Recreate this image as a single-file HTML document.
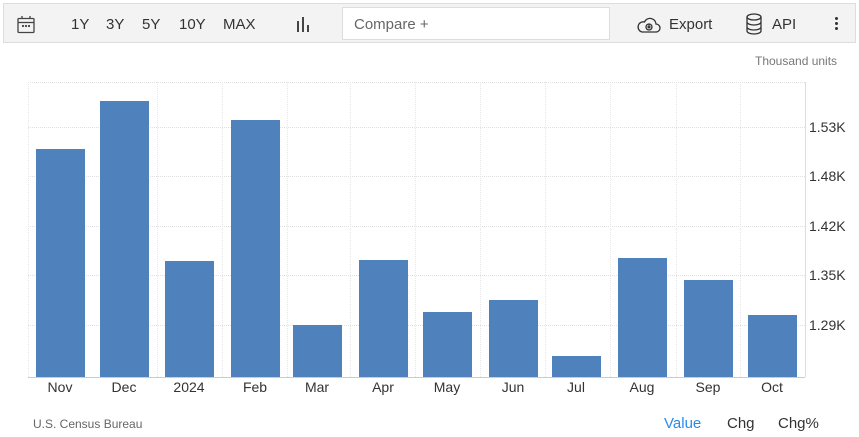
<!DOCTYPE html>
<html><head><style>
body{margin:0;width:859px;height:437px;background:#fff;font-family:"Liberation Sans",sans-serif;position:relative;overflow:hidden}
.tb{position:absolute;left:3px;top:3px;width:853px;height:40px;background:#f3f3f3;border:1px solid #ddd;box-sizing:border-box}
.t{position:absolute;font-size:15px;color:#333;top:16px}
.bar{position:absolute;background:#4f81bd;width:49px;bottom:60px}
.xl{position:absolute;top:379px;font-size:14px;color:#333;width:60px;text-align:center}
.yl{position:absolute;left:809px;font-size:14px;color:#333}
.g{position:absolute;left:28px;width:777px;border-top:1px dotted #e0e0e0}
.v{position:absolute;top:82px;height:295px;border-left:1px dotted #e6e6e6}
</style></head><body>
<div class="tb"></div>
<svg style="position:absolute;left:16px;top:15px" width="20" height="20" viewBox="0 0 20 20" fill="none" stroke="#444" stroke-width="1.3"><rect x="2" y="3.5" width="16" height="14" rx="1"/><line x1="2" y1="7.5" x2="18" y2="7.5"/><line x1="6" y1="1" x2="6" y2="4"/><line x1="14" y1="1" x2="14" y2="4"/><circle cx="7" cy="11" r=".5"/><circle cx="10" cy="11" r=".5"/><circle cx="13" cy="11" r=".5"/></svg>
<span class="t" style="left:71px">1Y</span><span class="t" style="left:106px">3Y</span><span class="t" style="left:142px">5Y</span><span class="t" style="left:179px">10Y</span><span class="t" style="left:223px">MAX</span>
<svg style="position:absolute;left:296px;top:16px" width="16" height="16"><rect x="1" y="5" width="2" height="11" fill="#444"/><rect x="6" y="1" width="2" height="15" fill="#444"/><rect x="11" y="9" width="2" height="7" fill="#444"/></svg>
<div style="position:absolute;left:342px;top:7px;width:268px;height:33px;background:#fff;border:1px solid #ddd;box-sizing:border-box"></div>
<span class="t" style="left:354px;color:#666">Compare +</span>
<svg style="position:absolute;left:636px;top:15px" width="26" height="20" viewBox="0 0 26 20" fill="none" stroke="#333" stroke-width="1.3"><path d="M6 17h14a4 4 0 0 0 0-8 6 6 0 0 0-11.5-2A5 5 0 0 0 6 17z"/><circle cx="13" cy="12" r="3" /><path d="M13 9v4m-1.5-1.5L13 13l1.5-1.5"/></svg>
<span class="t" style="left:669px">Export</span>
<svg style="position:absolute;left:745px;top:13px" width="18" height="22" viewBox="0 0 18 22" fill="none" stroke="#333" stroke-width="1.3"><ellipse cx="9" cy="4" rx="7" ry="3"/><path d="M2 4v14c0 1.7 3 3 7 3s7-1.3 7-3V4M2 9c0 1.7 3 3 7 3s7-1.3 7-3M2 14c0 1.7 3 3 7 3s7-1.3 7-3"/></svg>
<span class="t" style="left:772px">API</span>
<div style="position:absolute;left:835px;top:17px;width:3px;height:3px;background:#333;border-radius:50%;box-shadow:0 5px #333,0 10px #333"></div>
<div style="position:absolute;left:755px;top:54px;font-size:12px;color:#777">Thousand units</div>
<div class="g" style="top:82px"></div><div class="g" style="top:127px"></div><div class="g" style="top:176px"></div><div class="g" style="top:226px"></div><div class="g" style="top:275px"></div><div class="g" style="top:325px"></div>
<div class="v" style="left:28px"></div><div class="v" style="left:157px"></div><div class="v" style="left:222px"></div><div class="v" style="left:287px"></div><div class="v" style="left:350px"></div><div class="v" style="left:415px"></div><div class="v" style="left:480px"></div><div class="v" style="left:545px"></div><div class="v" style="left:610px"></div><div class="v" style="left:676px"></div><div class="v" style="left:740px"></div>
<div style="position:absolute;left:805px;top:82px;height:295px;border-left:1px solid #ddd"></div>
<div style="position:absolute;left:28px;top:377px;width:777px;border-top:1px solid #ccc"></div>
<div class="bar" style="left:36px;top:149px"></div>
<div class="bar" style="left:100px;top:101px"></div>
<div class="bar" style="left:165px;top:261px"></div>
<div class="bar" style="left:231px;top:120px"></div>
<div class="bar" style="left:293px;top:325px"></div>
<div class="bar" style="left:359px;top:260px"></div>
<div class="bar" style="left:423px;top:312px"></div>
<div class="bar" style="left:489px;top:300px"></div>
<div class="bar" style="left:552px;top:356px"></div>
<div class="bar" style="left:618px;top:258px"></div>
<div class="bar" style="left:684px;top:280px"></div>
<div class="bar" style="left:748px;top:315px"></div>
<div class="yl" style="top:119px">1.53K</div><div class="yl" style="top:168px">1.48K</div><div class="yl" style="top:218px">1.42K</div><div class="yl" style="top:267px">1.35K</div><div class="yl" style="top:317px">1.29K</div>
<div class="xl" style="left:30px">Nov</div><div class="xl" style="left:94px">Dec</div><div class="xl" style="left:159px">2024</div><div class="xl" style="left:225px">Feb</div><div class="xl" style="left:287px">Mar</div><div class="xl" style="left:353px">Apr</div><div class="xl" style="left:417px">May</div><div class="xl" style="left:483px">Jun</div><div class="xl" style="left:546px">Jul</div><div class="xl" style="left:612px">Aug</div><div class="xl" style="left:678px">Sep</div><div class="xl" style="left:742px">Oct</div>
<div style="position:absolute;left:33px;top:417px;font-size:12px;color:#666">U.S. Census Bureau</div>
<span style="position:absolute;left:664px;top:415px;font-size:15px;color:#2b8ae8">Value</span>
<span style="position:absolute;left:727px;top:415px;font-size:15px;color:#333">Chg</span>
<span style="position:absolute;left:778px;top:415px;font-size:15px;color:#333">Chg%</span>
</body></html>
